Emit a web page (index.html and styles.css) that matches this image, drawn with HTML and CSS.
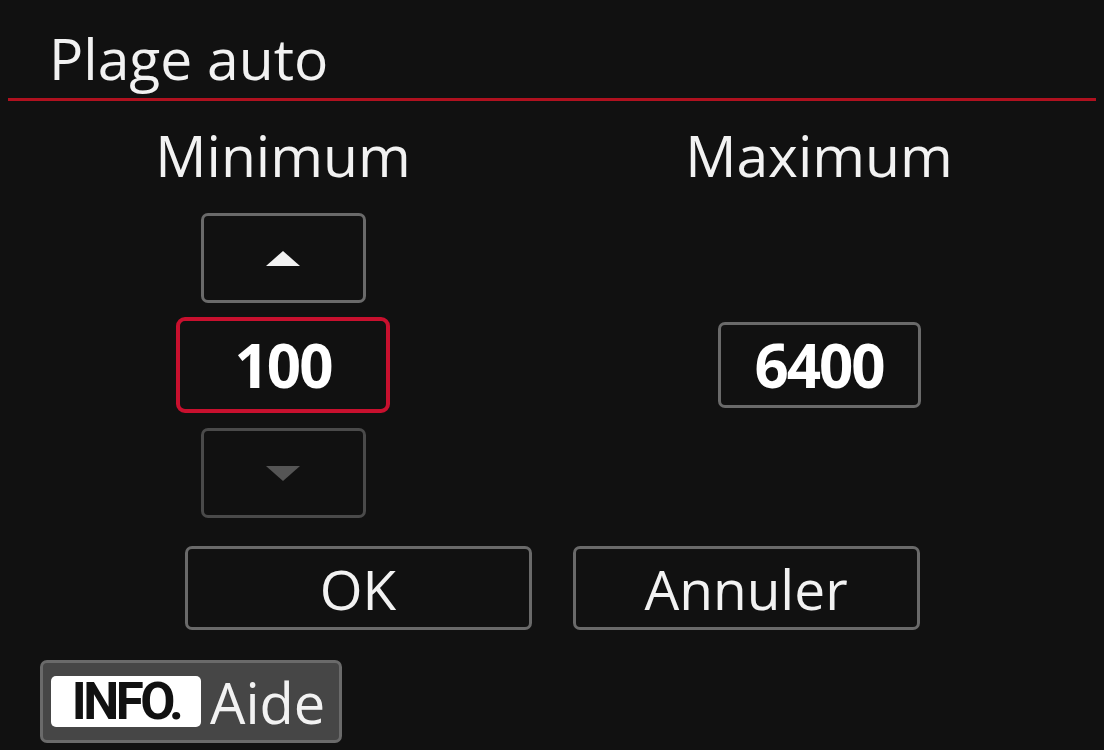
FILE: index.html
```html
<!DOCTYPE html>
<html lang="fr">
<head>
    <meta charset="UTF-8">
    <title>Plage auto</title>
    <link rel="stylesheet" href="styles.css">
</head>
<body>
    <div class="screen">
        <h1 class="title">Plage auto</h1>

        <div class="range">
            <div class="label">Minimum</div>
            <div class="label">Maximum</div>

            <div class="step up"><span class="tri tri-up"></span></div>
            <div class="empty"></div>

            <div class="value selected">100</div>
            <div class="value">6400</div>

            <div class="step down"><span class="tri tri-down"></span></div>
            <div class="empty"></div>
        </div>

        <div class="actions">
            <div class="btn">OK</div>
            <div class="btn">Annuler</div>
        </div>

        <div class="help">
            <span class="info">INFO.</span>
            <span class="help-text">Aide</span>
        </div>
    </div>
</body>
</html>
```

FILE: styles.css
```css
* {
    box-sizing: border-box;
}

body {
    margin: 0;
    background: #111111;
    color: #f2f2f2;
    font-family: "Open Sans", "Noto Sans", sans-serif;
}

.screen {
    width: 1104px;
    height: 750px;
    overflow: hidden;
}

.title {
    margin: 0 8px;
    height: 101px;
    padding: 30px 0 0 41px;
    font-size: 57px;
    font-weight: 400;
    line-height: 1;
    border-bottom: 3px solid #b0111f;
}

.range {
    display: grid;
    grid-template-columns: 536px 536px;
    grid-template-rows: 112px 104px 111px 90px;
    padding-left: 15px;
    justify-items: center;
    align-items: start;
}

.label {
    font-size: 57px;
    line-height: 1;
    padding-top: 26px;
}

.step {
    width: 165px;
    height: 90px;
    border: 3px solid #6a6a6a;
    border-radius: 7px;
    display: flex;
    align-items: center;
    justify-content: center;
}

.step.down {
    border-color: #4a4a4a;
}

.tri {
    width: 0;
    height: 0;
    border-left: 17px solid transparent;
    border-right: 17px solid transparent;
}

.tri-up {
    border-bottom: 15px solid #f2f2f2;
}

.tri-down {
    border-top: 15px solid #555555;
}

.value {
    display: flex;
    align-items: center;
    justify-content: center;
    margin-top: 5px;
    font-size: 60px;
    font-weight: 700;
    letter-spacing: -2px;
    border: 3px solid #6a6a6a;
    border-radius: 7px;
    width: 203px;
    height: 86px;
    color: #ffffff;
}

.value.selected {
    margin-top: 0;
    width: 214px;
    height: 96px;
    border: 4px solid #c8102e;
    border-radius: 9px;
}

.actions {
    display: flex;
    justify-content: center;
    gap: 41px;
    margin-top: 28px;
}

.btn {
    width: 347px;
    height: 84px;
    border: 3px solid #6a6a6a;
    border-radius: 7px;
    display: flex;
    align-items: center;
    justify-content: center;
    font-size: 55px;
}

.help {
    display: inline-flex;
    align-items: center;
    margin: 30px 0 0 40px;
    width: 302px;
    height: 83px;
    padding: 0 8px;
    background: #464646;
    border: 3px solid #6a6a6a;
    border-radius: 7px;
}

.info {
    display: flex;
    align-items: center;
    justify-content: center;
    width: 150px;
    height: 51px;
    background: #ffffff;
    color: #111111;
    border-radius: 5px;
    font-family: "Roboto", "Liberation Sans", sans-serif;
    font-weight: 700;
    font-size: 51px;
    letter-spacing: -3.5px;
    line-height: 1;
}

.help-text {
    margin-left: 9px;
    font-size: 56px;
    line-height: 1;
    color: #f2f2f2;
}
```
